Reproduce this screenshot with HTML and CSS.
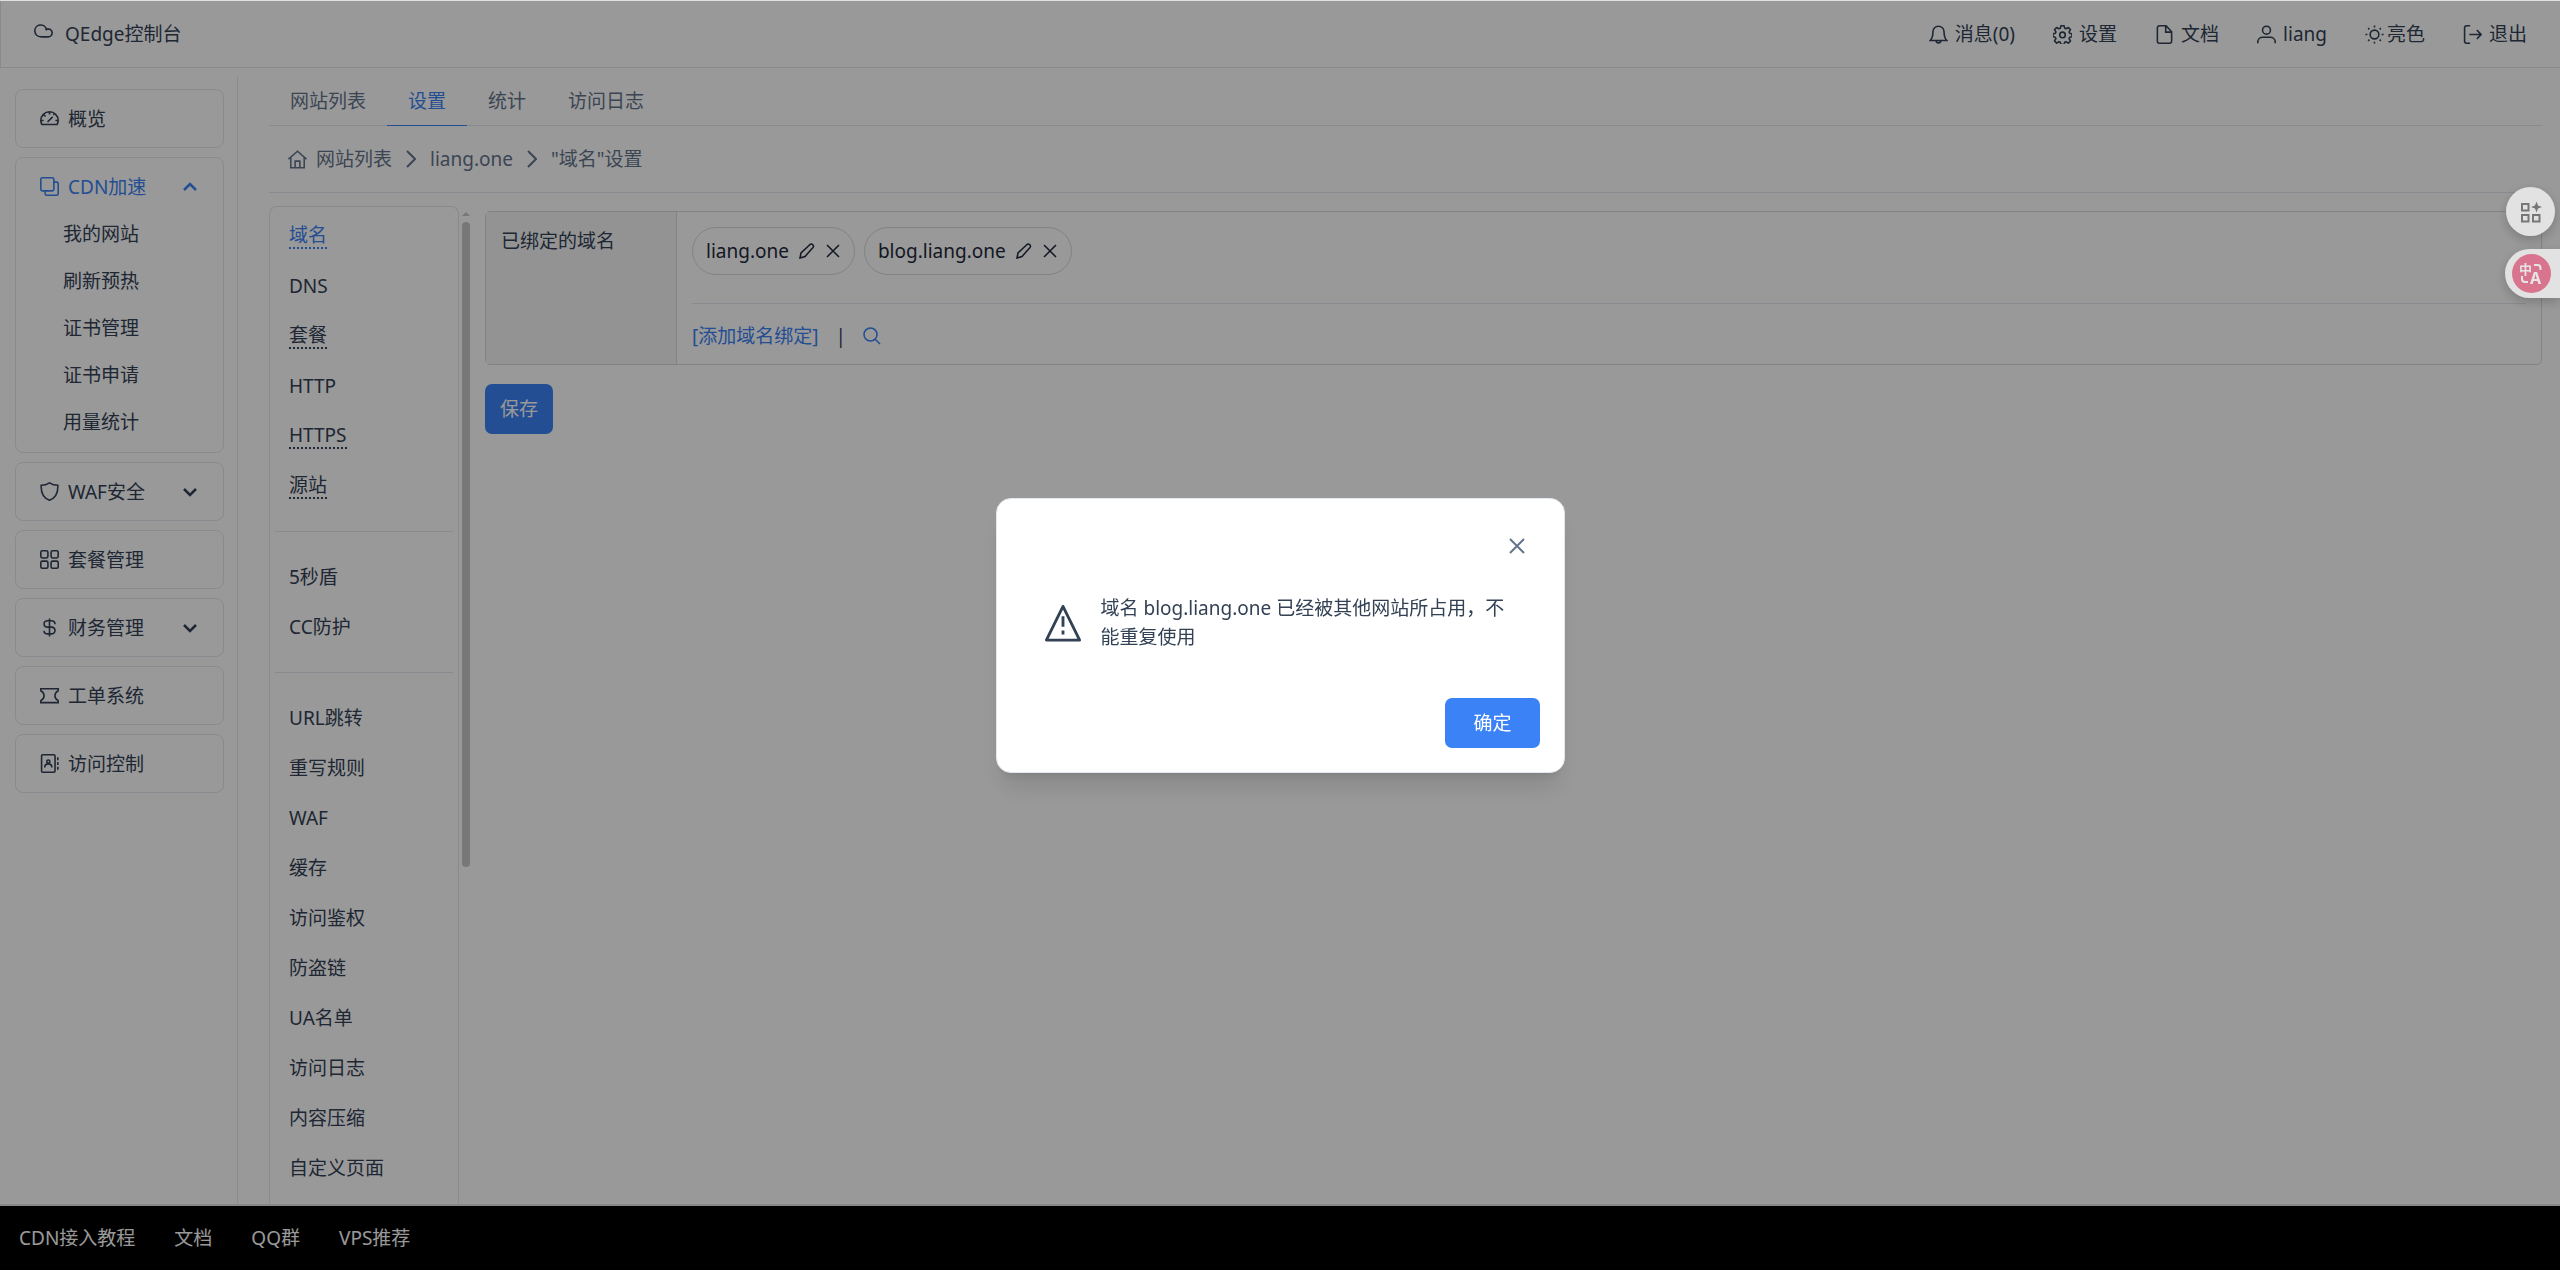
FILE: index.html
```html
<!DOCTYPE html>
<html lang="zh-CN">
<head>
  <meta charset="UTF-8" />
  <meta name="viewport" content="width=device-width, initial-scale=1.0" />
  <title>QEdge控制台</title>
  <link rel="stylesheet" href="styles.css">
</head>
<body>
  <header class="topbar">
    <a class="brand" href="#">
      <svg class="icon brand-icon" viewBox="0 0 24 24"><path d="M8.500 20a7.500 7.500 0 1 1 7.300-9.500A5 5 0 1 1 18.500 20ZM14.500 11.500a5 5 0 0 1 3.500-1.500"/></svg>
      <span>QEdge控制台</span>
    </a>
    <nav class="top-links">
      <a href="#">
        <svg class="icon" viewBox="0 0 24 24"><path d="M1.500 19.500h21C20 17 19 15 19 8.500a7 7 0 0 0-14 0C5 15 4 17 1.500 19.500ZM9 20c.5 3.500 5.500 3.500 6 0"/></svg>消息(0)
      </a>
      <a href="#">
        <svg class="icon" viewBox="0 0 24 24"><path d="M10 1h4l.7 3 1.800.8 2.900-1.700 2.700 2.700-1.800 2.900.8 1.700 2.900.8v3.600l-2.900.8-.8 1.700 1.800 2.900-2.700 2.700-2.900-1.800-1.800.8-.7 2.900h-4l-.7-2.900-1.800-.8-2.900 1.800-2.700-2.700 1.800-2.900-.8-1.700-2.900-.8v-3.600l2.900-.8.8-1.700-1.800-2.900 2.700-2.700 2.900 1.700 1.800-.8Z" stroke-linejoin="round"/><circle cx="12" cy="12.500" r="3.500"/></svg>设置
      </a>
      <a href="#">
        <svg class="icon" viewBox="0 0 24 24"><path d="M14 1H5.500A2.500 2.500 0 0 0 3 3.500v17A2.500 2.500 0 0 0 5.500 23h13a2.500 2.500 0 0 0 2.500-2.500V8.500ZM13.500 1v8H21"/></svg>文档
      </a>
      <a href="#">
        <svg class="icon" viewBox="0 0 24 24"><circle cx="12" cy="6.500" r="5"/><path d="M1 23v-2a6 6 0 0 1 6-5.500h10a6 6 0 0 1 6 5.500v2"/></svg>liang
      </a>
      <a class="tight" href="#">
        <svg class="icon" viewBox="0 0 24 24"><circle cx="12" cy="12" r="5.500"/><path d="M12 .5v2.500M12 21v2.500M.5 12H3M21 12h2.500M4 4l1.500 1.500M18.500 18.500 20 20M4 20l1.500-1.500M18.500 5.500 20 4"/></svg>亮色
      </a>
      <a href="#">
        <svg class="icon" viewBox="0 0 24 24"><path d="M9 1H4.500A2.500 2.500 0 0 0 2 3.500v17A2.500 2.500 0 0 0 4.500 23H9M8 12h15M17.500 6.500 23 12l-5.500 5.500"/></svg>退出
      </a>
    </nav>
  </header>

  <div class="page">
    <aside class="sidebar">
      <div class="panel">
        <a class="panel-head" href="#">
          <svg class="icon" viewBox="0 0 24 24"><path d="M2.500 19.500C1.500 18 1 16 1 14.500a11 11 0 0 1 22 0c0 1.500-.5 3.500-1.500 5ZM9.500 16.500 16 10M12 4v3M5 7.500 7 9.500M1.500 14.500H4.500M19.500 14.500h3M17 6.500l1 1"/></svg>概览
        </a>
      </div>
      <div class="panel">
        <a class="panel-head active" href="#">
          <svg class="icon" viewBox="0 0 24 24"><rect x="1" y="1" width="16.500" height="16.500" rx="2"/><path d="M17.500 6.500H21a2 2 0 0 1 2 2V21a2 2 0 0 1-2 2H8.500a2 2 0 0 1-2-2v-3.500"/></svg>CDN加速
          <svg class="caret" viewBox="0 0 14 14"><path d="M1 10l6-6 6 6"/></svg>
        </a>
        <ul class="sub-list">
          <li><a href="#">我的网站</a></li>
          <li><a href="#">刷新预热</a></li>
          <li><a href="#">证书管理</a></li>
          <li><a href="#">证书申请</a></li>
          <li><a href="#">用量统计</a></li>
        </ul>
      </div>
      <div class="panel">
        <a class="panel-head" href="#">
          <svg class="icon" viewBox="0 0 24 24"><path d="M12 1C9 3 5 4 1.500 4 1 13 4 20 12 23 20 20 23 13 22.500 4 19 4 15 3 12 1Z"/></svg>WAF安全
          <svg class="caret" viewBox="0 0 14 14"><path d="M1 4l6 6 6-6"/></svg>
        </a>
      </div>
      <div class="panel">
        <a class="panel-head" href="#">
          <svg class="icon" viewBox="0 0 24 24"><rect x="1" y="1" width="9" height="9" rx="2"/><rect x="14" y="1" width="9" height="9" rx="2"/><rect x="1" y="14" width="9" height="9" rx="2"/><rect x="14" y="14" width="9" height="9" rx="2"/></svg>套餐管理
        </a>
      </div>
      <div class="panel">
        <a class="panel-head" href="#">
          <svg class="icon" viewBox="0 0 24 24"><path d="M12 .5v23M19 8c0-3-2.500-4.500-5-4.500h-4C3.500 3.500 3.500 11.500 10 11.500h4.500c6 0 6 8.500-.5 8.500h-4C7 20 5 18.500 5 16"/></svg>财务管理
          <svg class="caret" viewBox="0 0 14 14"><path d="M1 4l6 6 6-6"/></svg>
        </a>
      </div>
      <div class="panel">
        <a class="panel-head" href="#">
          <svg class="icon" viewBox="0 0 24 24"><path d="M1 6V3.500h22V6c-5.500 3-5.500 9.500 0 12.500V21H1v-2.500C6.500 15.500 6.500 9 1 6Z"/></svg>工单系统
        </a>
      </div>
      <div class="panel">
        <a class="panel-head" href="#">
          <svg class="icon" viewBox="0 0 24 24"><rect x="2" y="1" width="17" height="22" rx="1.500"/><circle cx="10.500" cy="9.500" r="2"/><path d="M6 17c0-6 9-6 9 0M22.500 4v4M22.500 10v4M22.500 16v4"/></svg>访问控制
        </a>
      </div>
    </aside>

    <main class="main">
      <nav class="tabs">
        <a href="#">网站列表</a>
        <a class="active" href="#">设置</a>
        <a href="#">统计</a>
        <a href="#">访问日志</a>
      </nav>
      <nav class="breadcrumb">
        <a class="home" href="#">
          <svg class="icon" viewBox="0 0 24 24"><path d="M.5 11.500 12 1.500l11.500 10M3.500 9v13.500h17V9M9 22.500V14h6v8.500"/></svg>网站列表
        </a>
        <svg class="sep" viewBox="0 0 10 18"><path d="M1 1l8 8-8 8"/></svg>
        <a href="#">liang.one</a>
        <svg class="sep" viewBox="0 0 10 18"><path d="M1 1l8 8-8 8"/></svg>
        <span>"域名"设置</span>
      </nav>

      <div class="body">
        <nav class="settings">
          <a class="active" href="#"><span class="dotted">域名</span></a>
          <a href="#">DNS</a>
          <a href="#"><span class="dotted">套餐</span></a>
          <a href="#">HTTP</a>
          <a href="#"><span class="dotted">HTTPS</span></a>
          <a href="#"><span class="dotted">源站</span></a>
          <hr>
          <a href="#">5秒盾</a>
          <a href="#">CC防护</a>
          <hr>
          <a href="#">URL跳转</a>
          <a href="#">重写规则</a>
          <a href="#">WAF</a>
          <a href="#">缓存</a>
          <a href="#">访问鉴权</a>
          <a href="#">防盗链</a>
          <a href="#">UA名单</a>
          <a href="#">访问日志</a>
          <a href="#">内容压缩</a>
          <a href="#">自定义页面</a>
        </nav>
        <div class="scrollbar">
          <div class="scroll-up"></div>
          <div class="scroll-thumb"></div>
        </div>
        <form class="domain-form">
          <div class="field">
            <div class="field-label">已绑定的域名</div>
            <div class="field-value">
              <div class="chips">
                <span class="chip">liang.one
                  <button type="button" aria-label="编辑"><svg viewBox="0 0 16 16"><path d="M1 15l1-5L11 1.500c2-1.300 4.500 1.200 3 3L6 13.500Z"/></svg></button>
                  <button type="button" aria-label="删除"><svg viewBox="0 0 16 16"><path d="M2 2l12 12M14 2 2 14"/></svg></button>
                </span>
                <span class="chip">blog.liang.one
                  <button type="button" aria-label="编辑"><svg viewBox="0 0 16 16"><path d="M1 15l1-5L11 1.500c2-1.300 4.500 1.200 3 3L6 13.500Z"/></svg></button>
                  <button type="button" aria-label="删除"><svg viewBox="0 0 16 16"><path d="M2 2l12 12M14 2 2 14"/></svg></button>
                </span>
              </div>
              <div class="actions">
                <a href="#">[添加域名绑定]</a>
                <span class="bar">|</span>
                <a href="#" aria-label="搜索"><svg viewBox="0 0 18 18"><circle cx="7.500" cy="7.500" r="6.500"/><path d="M12.200 12.200 17 17"/></svg></a>
              </div>
            </div>
          </div>
          <button class="btn save" type="button">保存</button>
        </form>
      </div>
    </main>
  </div>

  <footer class="footer">
    <a href="#">CDN接入教程</a>
    <a href="#">文档</a>
    <a href="#">QQ群</a>
    <a href="#">VPS推荐</a>
  </footer>

  <div class="overlay">
    <div class="dialog" role="alertdialog" aria-modal="true" aria-describedby="msg">
      <div class="dialog-head">
        <button class="close" type="button" aria-label="关闭"><svg viewBox="0 0 16 16"><path d="M1 1l14 14M15 1 1 15"/></svg></button>
      </div>
      <div class="dialog-body">
        <svg class="warn" viewBox="0 0 38 40"><path d="M19 2.500 36.500 38h-35Z"/><path d="M19 13v11M19 28v4"/></svg>
        <p id="msg">域名 blog.liang.one 已经被其他网站所占用，不能重复使用</p>
      </div>
      <div class="dialog-foot">
        <button class="btn ok" type="button">确定</button>
      </div>
    </div>
  </div>

  <!-- floating helper buttons -->
  <div class="float-tools">
    <button class="float-apps" type="button" aria-label="工具">
      <svg viewBox="0 0 22 22"><path d="M2 3h6.500v6.500H2ZM2 14h6.500v6.500H2ZM13 14h6.500v6.500H13Z"/><path class="spark" d="M16.500.5 18 4.500 22 6l-4 1.500-1.500 4L15 7.500 11 6l4-1.500Z"/></svg>
    </button>
    <button class="float-translate" type="button" aria-label="翻译">
      <svg viewBox="0 0 39 39"><circle class="disc" cx="19.500" cy="19.500" r="19.500"/><text class="logo-zh" x="7" y="20">中</text><text class="logo-en" x="18" y="30">A</text><path class="arc" d="M22 11h3.500a3 3 0 0 1 3 3v2M10 22v3a3 3 0 0 0 3 3h3"/></svg>
    </button>
  </div>
</body>
</html>
```
FILE: styles.css
```css
* {
  box-sizing: border-box;
}
body {
  margin: 0;
  height: 100vh;
  display: flex;
  flex-direction: column;
  overflow: hidden;
  border-top: 1px solid #dfe1df;
  background: white;
  color: #334155;
  font-family: "Noto Sans", "Noto Sans CJK SC", sans-serif;
  font-size: 19px;
  line-height: 28px;
}
a {
  color: inherit;
  text-decoration: none;
}
button {
  font: inherit;
  color: inherit;
  border: none;
  background: none;
  padding: 0;
  cursor: pointer;
}
svg {
  display: block;
  flex: none;
  fill: none;
  stroke: currentColor;
  stroke-width: 2;
}
.icon {
  width: 19px;
  height: 19px;
}

/* top bar */
.topbar {
  display: flex;
  justify-content: space-between;
  align-items: center;
  height: 67px;
  flex: none;
  padding: 0 33px;
  border: 1px solid #e2e8f0;
  border-width: 0 0 1px 1px;
}
.brand {
  display: flex;
  align-items: center;
  gap: 12px;
}
.brand-icon {
  margin-bottom: 8px;
}
.top-links {
  display: flex;
  gap: 38px;
}
.top-links a {
  display: flex;
  align-items: center;
  gap: 7px;
}
.top-links .tight {
  gap: 3px;
}

.page {
  display: flex;
  flex: 1;
  min-height: 0;
}

/* left menu */
.sidebar {
  width: 238px;
  flex: none;
  margin-top: 9px;
  padding: 12px 13px 0 15px;
  border-right: 1px solid #e2e8f0;
}
.panel {
  margin-bottom: 9px;
  border: 1px solid #e2e8f0;
  border-radius: 8px;
}
.panel-head {
  display: flex;
  align-items: center;
  gap: 9px;
  height: 57px;
  padding: 0 26px 0 24px;
}
.panel-head.active {
  color: #3b82f6;
}
.caret {
  width: 14px;
  height: 14px;
  margin-left: auto;
  stroke-width: 2.5;
}
.sub-list {
  list-style: none;
  margin: -4px 0 0;
  padding: 0 0 6px;
}
.sub-list a {
  display: block;
  padding-left: 47px;
  line-height: 47px;
}

/* content */
.main {
  flex: 1;
  min-width: 0;
  display: flex;
  flex-direction: column;
  padding: 9px 18px 0 31px;
}
.tabs {
  display: flex;
  flex: none;
  border-bottom: 1px solid #e5e7eb;
  color: #64748b;
}
.tabs a {
  padding: 10px 21px;
  margin-bottom: -1px;
  border-bottom: 1px solid transparent;
}
.tabs .active {
  color: #3b82f6;
  border-color: #3b82f6;
}
.breadcrumb {
  display: flex;
  align-items: center;
  gap: 14px;
  flex: none;
  height: 67px;
  padding-left: 19px;
  border-bottom: 1px solid #e2e8f0;
  color: #64748b;
}
.home {
  display: flex;
  align-items: center;
  gap: 9px;
}
.sep {
  width: 10px;
  height: 18px;
}
.body {
  display: flex;
  flex: 1;
  min-height: 0;
  padding-top: 13px;
}
.settings {
  width: 190px;
  flex: none;
  padding: 4px 5px;
  overflow: hidden;
  border: 1px solid #e2e8f0;
  border-bottom: none;
  border-radius: 8px 8px 0 0;
}
.settings a {
  display: flex;
  align-items: center;
  height: 50px;
  padding-left: 14px;
}
.settings .active {
  color: #3b82f6;
}
.settings hr {
  margin: 20px 0;
  border: none;
  border-top: 1px solid #e2e8f0;
}
.dotted {
  line-height: 24px;
  border-bottom: 2px dotted;
}
.scrollbar {
  width: 8px;
  flex: none;
  margin: 6px 15px 0 3px;
}
.scroll-up {
  border: 4px solid transparent;
  border-top: none;
  border-bottom-color: #c8c8c8;
}
.scroll-thumb {
  height: 65%;
  margin-top: 6px;
  border-radius: 4px;
  background: #c8c8c8;
}

/* domain form */
.domain-form {
  flex: 1;
  min-width: 0;
  padding-top: 5px;
}
.field {
  display: flex;
  border: 1px solid #d8dbde;
  border-radius: 5px;
}
.field-label {
  width: 191px;
  flex: none;
  padding: 15px;
  border-right: 1px solid #d8dbde;
  background: #f5f5f5;
}
.field-value {
  flex: 1;
  padding: 15px 15px 14px;
}
.chips {
  display: flex;
  gap: 9px;
  padding-bottom: 28px;
  border-bottom: 1px solid #e2e8f0;
}
.chip {
  display: flex;
  align-items: center;
  gap: 10px;
  padding: 9px 13px;
  border: 1px solid #d8dbde;
  border-radius: 24px;
  color: #1e293b;
}
.chip svg {
  width: 16px;
  height: 16px;
  stroke-width: 1.5;
}
.actions {
  display: flex;
  align-items: center;
  padding-top: 18px;
  color: #3b82f6;
}
.actions svg {
  width: 18px;
  height: 18px;
  stroke-width: 1.5;
}
.bar {
  margin: 0 17px;
  color: #334155;
}
.btn {
  height: 50px;
  border-radius: 7px;
  background: #3b82f6;
  color: white;
}
.save {
  margin-top: 19px;
  padding: 0 15px;
}

.footer {
  display: flex;
  align-items: center;
  gap: 39px;
  flex: none;
  height: 66px;
  padding: 0 19px;
  border-top: 2px solid #e2e2e2;
  background: black;
  color: white;
}

/* alert dialog */
.overlay {
  position: fixed;
  inset: 1px 0 0;
  display: flex;
  align-items: center;
  justify-content: center;
  background: rgba(0, 0, 0, 0.4);
}
.dialog {
  width: 569px;
  padding: 24px;
  border: 1px solid #e2e8f0;
  border-radius: 15px;
  background: white;
  box-shadow: 0 20px 25px -5px rgba(0, 0, 0, 0.1), 0 8px 10px -6px rgba(0, 0, 0, 0.1);
}
.dialog-head {
  display: flex;
  justify-content: flex-end;
}
.close {
  padding: 15px;
  color: #64748b;
}
.close svg {
  width: 16px;
  height: 16px;
}
.dialog-body {
  display: flex;
  align-items: center;
  gap: 19px;
  padding: 25px 24px 46px 23px;
}
.dialog-body p {
  margin: 0;
  line-height: 29px;
}
.warn {
  width: 38px;
  height: 38px;
  stroke-width: 3;
  stroke-linejoin: round;
}
.dialog-foot {
  display: flex;
  justify-content: flex-end;
}
.ok {
  padding: 0 28px;
}

/* floating tools */
.float-tools {
  position: fixed;
  top: 187px;
  right: 0;
  display: flex;
  flex-direction: column;
  align-items: flex-end;
  gap: 13px;
}
.float-apps {
  display: grid;
  place-items: center;
  width: 49px;
  height: 49px;
  margin-right: 5px;
  border-radius: 50%;
  background: #e2e2e2;
  color: #777;
  box-shadow: 0 4px 12px rgba(0, 0, 0, 0.2);
}
.float-apps svg {
  width: 22px;
  height: 22px;
}
.spark {
  fill: #777;
  stroke: none;
}
.float-translate {
  padding: 5px 9px 5px 7px;
  border-radius: 25px 0 0 25px;
  background: #e2e2e2;
  box-shadow: 0 4px 12px rgba(0, 0, 0, 0.2);
}
.float-translate svg {
  width: 39px;
  height: 39px;
  stroke: none;
}
.disc {
  fill: #d9748f;
}
.arc {
  stroke: #e8e4e5;
}
.logo-zh, .logo-en {
  fill: #e8e4e5;
  font-weight: bold;
}
.logo-zh {
  font-size: 13px;
}
.logo-en {
  font-size: 16px;
}
```
